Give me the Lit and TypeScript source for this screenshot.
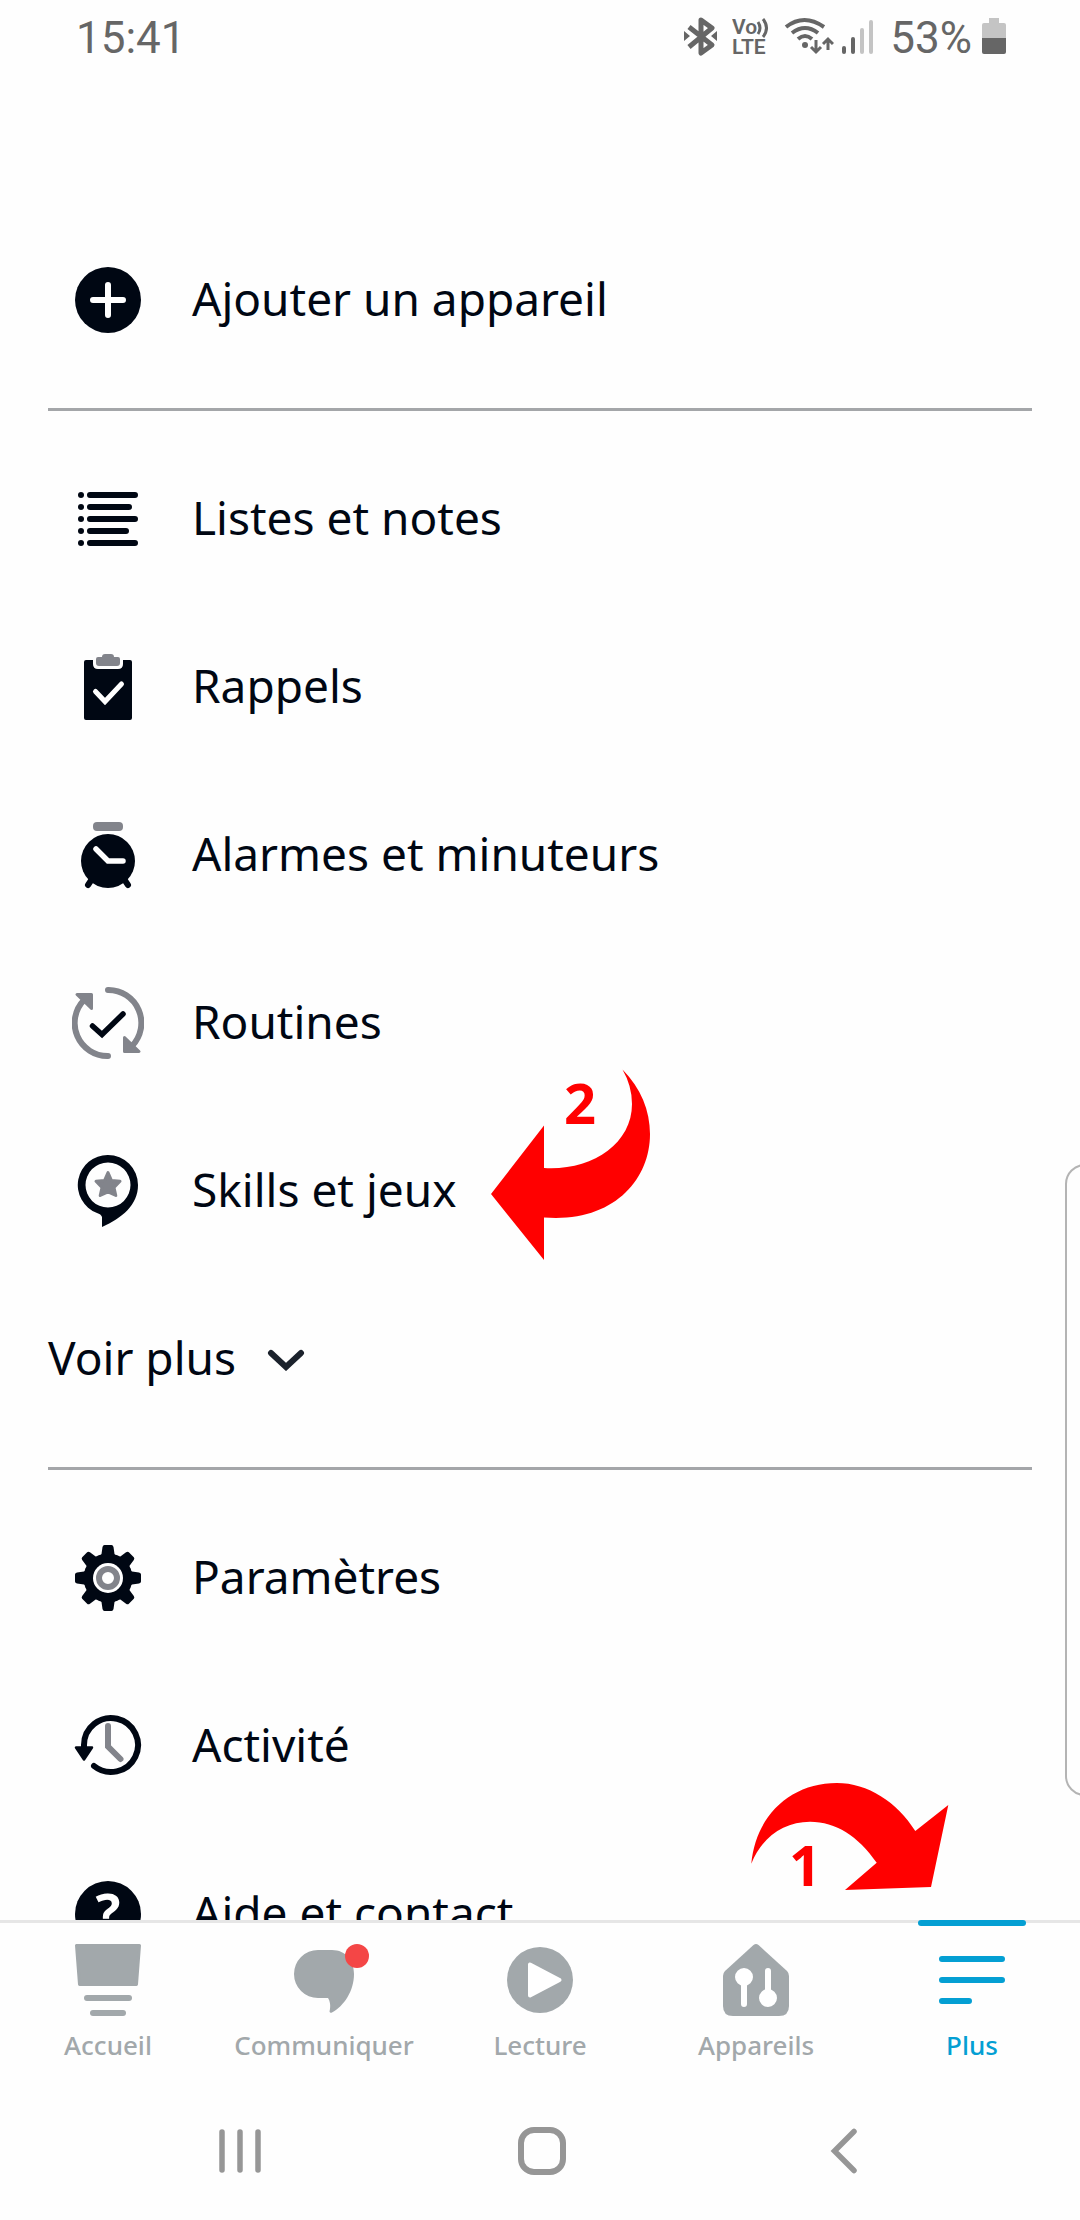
import { LitElement, html, css, svg, nothing } from "lit";
import type { SVGTemplateResult } from "lit";
import { customElement, state } from "lit/decorators.js";
import { classMap } from "lit/directives/class-map.js";

const INK = "#000713";
const GREY = "#82848b";

interface MenuItem {
  label: string;
  icon: SVGTemplateResult;
  callout?: boolean;
}

interface Tab {
  label: string;
  icon: SVGTemplateResult;
  badge?: boolean;
}

const plusIcon = svg`
  <circle cx="36" cy="36" r="33" fill=${INK} />
  <path d="M36 21V51M21 36H51" stroke="#fff" stroke-width="6" stroke-linecap="round" />`;

const listIcon = svg`
  <g fill=${INK}>
    <circle cx="9" cy="12" r="3" /><circle cx="9" cy="24" r="3" /><circle cx="9" cy="36" r="3" />
    <circle cx="9" cy="48" r="3" /><circle cx="9" cy="60" r="3" />
  </g>
  <path d="M18 12H63M18 24H57M18 36H63M18 48H54M18 60H63" stroke=${INK} stroke-width="6" stroke-linecap="round" />`;

const clipboardIcon = svg`
  <path fill=${INK} d="M14 9H21V13Q21 18 26 18H46Q51 18 51 13V9H58Q60 9 60 11V67Q60 69 58 69H14Q12 69 12 67V11Q12 9 14 9Z" />
  <path fill=${GREY} d="M26 6H30Q30 3 33 3H39Q42 3 42 6H46Q48 6 48 8V12Q48 15 45 15H27Q24 15 24 12V8Q24 6 26 6Z" />
  <path d="M23.500 40.500L33 50.500L49.500 33" fill="none" stroke="#fff" stroke-width="5" stroke-linecap="round" />`;

const alarmIcon = svg`
  <rect x="21" y="3" width="30" height="9" rx="4" fill=${GREY} />
  <path d="M22 57L16 66M50 57L56 66" stroke=${INK} stroke-width="6" stroke-linecap="round" />
  <circle cx="36" cy="42" r="27" fill=${INK} />
  <path d="M24 30L36 42H51" fill="none" stroke="#fff" stroke-width="5.500" stroke-linecap="round" />`;

const routineIcon = svg`
  <g fill="none" stroke=${GREY} stroke-width="6" stroke-linecap="round">
    <path d="M36 3A33 33 0 0 1 60 59" />
    <path d="M36 69A33 33 0 0 1 12 13" />
  </g>
  <g fill=${GREY} stroke=${GREY} stroke-width="3" stroke-linejoin="round">
    <path d="M5 7.500H19.500V21.500Z" />
    <path d="M67 64.500H52.500V50.500Z" />
  </g>
  <path d="M20.500 39L30 47.500L51 27" fill="none" stroke=${INK} stroke-width="5.500" stroke-linecap="round" />`;

const skillsIcon = svg`
  <path fill=${INK} fill-rule="evenodd" d="M36 0A30 30 0 0 1 66 30C66 50 50 63 30 72V62Q29 59 25 58A30 30 0 0 1 36 0ZM36 7.500A22.500 22.500 0 1 0 36 52.500A22.500 22.500 0 1 0 36 7.500Z" />
  <path fill=${GREY} stroke=${GREY} stroke-width="3" stroke-linejoin="round" d="M36 17.500L39.500 25.500L48 26.300L42 32.500L43.800 40.500L36 36.800L28.200 40.500L30 32.500L24 26.300L32.500 25.500Z" />`;

const gearIcon = svg`
  <g fill=${INK}>
    <circle cx="36" cy="36" r="24.500" />
    ${[0, 45, 90, 135, 180, 225, 270, 315].map(
      (a) => svg`<path transform="rotate(${a} 36 36)" d="M32.500 3H39.500Q41 3 41.500 5L42.500 12Q43 14 48 16L36 24L24 16Q29 14 29.500 12L30.500 5Q31 3 32.500 3Z" />`,
    )}
  </g>
  <circle cx="36" cy="36" r="15" fill="#fff" />
  <circle cx="36" cy="36" r="9" fill="none" stroke=${GREY} stroke-width="6" />`;

const historyIcon = svg`
  <path d="M12 38V35A27 27 0 1 1 22 56" fill="none" stroke=${INK} stroke-width="6" stroke-linecap="round" />
  <path d="M4 37.500H20L12 49.500Z" fill=${INK} stroke=${INK} stroke-width="2.500" stroke-linejoin="round" />
  <path d="M36 16V36.500L48.500 49" fill="none" stroke=${GREY} stroke-width="6" stroke-linecap="round" />`;

const helpIcon = svg`
  <circle cx="36" cy="36" r="33" fill=${INK} />
  <text x="36" y="53" text-anchor="middle" font-family="Noto Sans, sans-serif" font-size="52" font-weight="700" fill="#fff">?</text>`;

const homeTab = svg`
  <path stroke="currentColor" stroke-width="3" stroke-linejoin="round" d="M4.500 1.500H67.500L64.500 40.500H7.500Z" />
  <rect x="12" y="51" width="48" height="6" rx="3" /><rect x="18" y="66" width="36" height="6" rx="3" />`;

const talkTab = svg`
  <path d="M30 6H44C58 6 66 17 66 30C66 47 56 62 44 68.500Q42 69.500 41.500 67.500C43 62 42 57 40 54H30A24 24 0 0 1 30 6Z" />`;

const playTab = svg`
  <circle cx="36" cy="36" r="33" />
  <path fill="#fff" stroke="#fff" stroke-width="4" stroke-linejoin="round" d="M26 20.500V51.500L55.500 36Z" />`;

const devicesTab = svg`
  <path d="M33.500 1Q36 -1 38.500 1L67 27Q69 29 69 32V62Q69 72 59 72H13Q3 72 3 62V32Q3 29 5 27Z" />
  <g fill="#fff" stroke="#fff" stroke-width="6" stroke-linecap="round">
    <path d="M24 33V60M48 54V27" /><circle cx="24" cy="33" r="6" /><circle cx="48" cy="54" r="6" />
  </g>`;

const moreTab = svg`
  <path d="M6 15H66M6 36H66M6 57H33" stroke="currentColor" stroke-width="6" stroke-linecap="round" />`;

const PRIMARY: MenuItem[] = [{ label: "Ajouter un appareil", icon: plusIcon }];
const FEATURES: MenuItem[] = [
  { label: "Listes et notes", icon: listIcon },
  { label: "Rappels", icon: clipboardIcon },
  { label: "Alarmes et minuteurs", icon: alarmIcon },
  { label: "Routines", icon: routineIcon },
  { label: "Skills et jeux", icon: skillsIcon, callout: true },
];
const SYSTEM: MenuItem[] = [
  { label: "Paramètres", icon: gearIcon },
  { label: "Activité", icon: historyIcon },
  { label: "Aide et contact", icon: helpIcon },
];
const TABS: Tab[] = [
  { label: "Accueil", icon: homeTab },
  { label: "Communiquer", icon: talkTab, badge: true },
  { label: "Lecture", icon: playTab },
  { label: "Appareils", icon: devicesTab },
  { label: "Plus", icon: moreTab },
];

@customElement("status-bar")
export class StatusBar extends LitElement {
  static styles = css`
    :host {
      display: flex;
      align-items: center;
      justify-content: space-between;
      height: 72px;
      box-sizing: border-box;
      padding: 4px 74px 0 76px;
      font-family: Roboto, sans-serif;
      font-size: 44px;
      line-height: 60px;
      color: #666;
    }
    .icons {
      display: flex;
      align-items: center;
    }
    svg {
      display: block;
    }
    .volte {
      margin-left: 14px;
      font-family: Roboto, sans-serif;
      font-weight: 600;
    }
    .wifi {
      margin-left: 14px;
    }
    .signal {
      margin: 0 16px 0 8px;
    }
    .battery {
      margin-left: 10px;
    }
  `;

  render() {
    return html`
      <span>15:41</span>
      <div class="icons">
        <svg width="34" height="44" viewBox="0 0 34 44" role="img" aria-label="Bluetooth">
          <path d="M5 11L28 29L17 37V4L28 12L5 31" fill="none" stroke="#666" stroke-width="5" stroke-linejoin="round" />
          <path d="M0 15L6 20L0 25ZM33 15L27 20L33 25Z" fill="#666" />
        </svg>
        <svg class="volte" width="38" height="44" viewBox="0 0 38 44" fill="#666">
          <text x="0" y="18" font-size="21">Vo</text>
          <path d="M26 6Q30 12 26 18M31 3Q38 12 31 21" fill="none" stroke="#666" stroke-width="3" />
          <text x="0" y="38" font-size="21">LTE</text>
        </svg>
        <svg class="wifi" width="50" height="44" viewBox="0 0 50 44" role="img" aria-label="Wi-Fi">
          <g fill="none" stroke="#666" stroke-width="4">
            <path d="M2 11Q20 -3 40 11" /><path d="M8 17Q21 7 34 17" /><path d="M14 23Q21 17 28 23" />
          </g>
          <circle cx="21" cy="29" r="3" fill="#666" />
          <path d="M32 24V35M27 31L32 36L37 31M44 34V24M39 28L44 23L49 28" fill="none" stroke="#666" stroke-width="3" />
        </svg>
        <svg class="signal" width="32" height="44" viewBox="0 0 32 44" role="img" aria-label="Signal">
          <rect x="0" y="30" width="4" height="8" rx="2" fill="#666" /><rect x="9" y="21" width="4" height="17" rx="2" fill="#666" />
          <rect x="18" y="12" width="4" height="26" rx="2" fill="#c4c4c4" /><rect x="27" y="4" width="4" height="34" rx="2" fill="#c4c4c4" />
        </svg>
        <span>53%</span>
        <svg class="battery" width="24" height="44" viewBox="0 0 24 44" role="img" aria-label="Batterie">
          <path fill="#c4c4c4" d="M7 2H17V7H22Q24 7 24 9V24H0V9Q0 7 2 7H7Z" />
          <path fill="#666" d="M0 22H24V36Q24 38 22 38H2Q0 38 0 36Z" />
        </svg>
      </div>
    `;
  }
}

@customElement("app-root")
export class AppRoot extends LitElement {
  static styles = css`
    :host {
      display: flex;
      flex-direction: column;
      height: 100vh;
      overflow: hidden;
      background: #fefefe;
      color: #000713;
      font-family: "Noto Sans", sans-serif;
      font-size: 46px;
    }
    button {
      border: 0;
      padding: 0;
      background: none;
      color: inherit;
      font: inherit;
      text-align: left;
    }
    svg {
      display: block;
    }
    main {
      position: relative;
      flex: 1;
      min-height: 0;
      overflow: hidden;
      padding: 144px 48px 0;
    }
    .group {
      list-style: none;
      margin: 0;
      padding: 0;
    }
    .group + .group {
      margin-top: 24px;
      border-top: 3px solid #a4a6a9;
      padding-top: 24px;
    }
    .item {
      position: relative;
    }
    .row {
      display: flex;
      align-items: center;
      gap: 48px;
      width: 100%;
      height: 168px;
      padding: 0 24px;
    }
    .more {
      gap: 30px;
      padding: 0;
    }
    .label {
      line-height: 60px;
      padding-bottom: 4px;
    }
    .callout {
      position: absolute;
      color: #f00;
      font-size: 56px;
      font-weight: 700;
      line-height: 60px;
      pointer-events: none;
    }
    .callout-skills {
      left: 443px;
      top: -38px;
    }
    .callout-tab {
      right: 131px;
      bottom: 30px;
    }
    .digit {
      position: absolute;
    }
    .callout-skills .digit {
      left: 73px;
      top: 3px;
    }
    .callout-tab .digit {
      left: 38px;
      top: 52px;
    }
    .edge-panel {
      position: absolute;
      right: -40px;
      top: 1092px;
      width: 51px;
      height: 628px;
      border: 2px solid #b4b4b4;
      border-radius: 20px;
    }
    .tabs {
      display: flex;
      border-top: 3px solid #e6e6e6;
    }
    .tab {
      position: relative;
      flex: 1;
      min-width: 0;
      display: flex;
      flex-direction: column;
      align-items: center;
      gap: 11px;
      height: 159px;
      box-sizing: border-box;
      padding-top: 21px;
      color: #a2a8ab;
      font-size: 26px;
      font-weight: 500;
      line-height: 36px;
    }
    .tab.active {
      color: #049fd3;
    }
    .tab.active::before {
      content: "";
      position: absolute;
      top: -3px;
      left: 50%;
      width: 108px;
      height: 6px;
      margin-left: -54px;
      border-radius: 3px;
      background: #049fd3;
    }
    .glyph {
      position: relative;
    }
    .badge {
      position: absolute;
      top: 0;
      left: 57px;
      width: 24px;
      height: 24px;
      border-radius: 50%;
      background: #f44646;
    }
    .system {
      display: grid;
      grid-template-columns: repeat(3, 1fr);
      padding: 0 85px 0 89px;
    }
    .key {
      display: flex;
      align-items: center;
      justify-content: center;
      height: 138px;
    }
  `;

  @state() private activeTab = "Plus";

  private renderItem(item: MenuItem) {
    return html`
      <li class="item">
        <button class="row">
          <svg width="72" height="72" viewBox="0 0 72 72" aria-hidden="true">${item.icon}</svg>
          <span class="label">${item.label}</span>
        </button>
        ${item.callout
          ? html`<div class="callout callout-skills">
              <svg width="159" height="192" viewBox="491 1069 159 192" aria-hidden="true">
                <path fill="#f00" d="M491 1194L544 1125.500V1168C590 1171 632 1145 632 1104Q632 1086 622.500 1069.500C641 1088 650 1111 650 1134C650 1181 612 1223 544 1217.500V1260Z" />
              </svg>
              <span class="digit">2</span>
            </div>`
          : nothing}
      </li>
    `;
  }

  private renderTab(tab: Tab) {
    return html`
      <button
        class=${classMap({ tab: true, active: tab.label === this.activeTab })}
        @click=${() => (this.activeTab = tab.label)}
      >
        <span class="glyph">
          <svg width="72" height="72" viewBox="0 0 72 72" fill="currentColor" aria-hidden="true">${tab.icon}</svg>
          ${tab.badge ? html`<span class="badge"></span>` : nothing}
        </span>
        <span>${tab.label}</span>
      </button>
    `;
  }

  render() {
    return html`
      <status-bar></status-bar>
      <main>
        <ul class="group">${PRIMARY.map((i) => this.renderItem(i))}</ul>
        <ul class="group">
          ${FEATURES.map((i) => this.renderItem(i))}
          <li class="item">
            <button class="row more">
              <span class="label">Voir plus</span>
              <svg width="40" height="24" viewBox="0 0 40 24" aria-hidden="true">
                <path d="M5 6L20 20L35 6" fill="none" stroke="#1b222c" stroke-width="6" stroke-linecap="round" />
              </svg>
            </button>
          </li>
        </ul>
        <ul class="group">${SYSTEM.map((i) => this.renderItem(i))}</ul>
        <div class="edge-panel"></div>
        <div class="callout callout-tab">
          <svg width="198" height="108" viewBox="751 1782 198 108" aria-hidden="true">
            <path fill="#f00" d="M751.300 1863.700C756 1814 792 1783 836.700 1783C868 1783 897 1802 915.300 1831L948.300 1805L931 1887L845 1890L876.700 1862.700C858 1836 836 1821.700 810 1821.700C784 1821.700 762 1837 751.300 1863.700Z" />
          </svg>
          <span class="digit">1</span>
        </div>
      </main>
      <nav class="tabs">${TABS.map((t) => this.renderTab(t))}</nav>
      <div class="system">
        <button class="key" aria-label="Applications récentes">
          <svg width="44" height="44" viewBox="0 0 44 44">
            <path d="M4 3V41M22 3V41M40 3V41" stroke="#969696" stroke-width="5.500" stroke-linecap="round" />
          </svg>
        </button>
        <button class="key" aria-label="Écran d'accueil">
          <svg width="48" height="48" viewBox="0 0 48 48">
            <rect x="3" y="3" width="42" height="42" rx="13" fill="none" stroke="#969696" stroke-width="6" />
          </svg>
        </button>
        <button class="key" aria-label="Retour">
          <svg width="28" height="46" viewBox="0 0 28 46">
            <path d="M24 3.500L4.500 23L24 42.500" fill="none" stroke="#969696" stroke-width="5.500" stroke-linecap="round" />
          </svg>
        </button>
      </div>
    `;
  }
}
